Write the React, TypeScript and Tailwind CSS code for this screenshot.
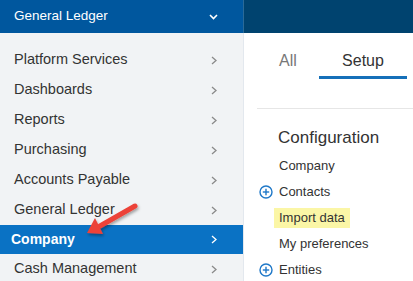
import React from "react";

const items = [
  "Platform Services",
  "Dashboards",
  "Reports",
  "Purchasing",
  "Accounts Payable",
  "General Ledger",
  "Company",
  "Cash Management",
];

function Chevron({ color }: { color: string }) {
  return (
    <svg width="6" height="9" viewBox="0 0 6 9" className="block">
      <polyline points="1,1 5,4.5 1,8" fill="none" stroke={color} strokeWidth="1.3" />
    </svg>
  );
}

function Plus() {
  return (
    <svg width="14" height="14" viewBox="0 0 14 14" className="block">
      <circle cx="7" cy="7" r="6" fill="none" stroke="#1f78c8" strokeWidth="1.4" />
      <line x1="7" y1="3.8" x2="7" y2="10.2" stroke="#1f78c8" strokeWidth="1.4" />
      <line x1="3.8" y1="7" x2="10.2" y2="7" stroke="#1f78c8" strokeWidth="1.4" />
    </svg>
  );
}

export default function App() {
  const font = { fontFamily: '"Liberation Sans", Arial, sans-serif' };
  return (
    <div className="relative w-[413px] h-[281px] overflow-hidden flex items-start bg-white" style={font}>
      <div className="w-[243px] h-[281px] shrink-0 bg-[#f1f3f5]">
        <div className="h-[33px] bg-[#00579e] flex items-center justify-between pl-[14px] pr-[25px] text-white text-[13.5px]">
          <span>General Ledger</span>
          <svg width="9" height="6" viewBox="0 0 9 6" className="block">
            <polyline points="1,1 4.5,4.5 8,1" fill="none" stroke="#ffffff" strokeWidth="1.6" />
          </svg>
        </div>
        <div className="pt-[12px]">
          {items.map((it) =>
            it === "Company" ? (
              <div key={it} className="h-[29px] flex items-center justify-between bg-[#0a72c4] pl-[11px] pr-[26px] text-white font-bold text-[14px]">
                <span>{it}</span>
                <Chevron color="#ffffff" />
              </div>
            ) : (
              <div key={it} className="h-[30px] flex items-center justify-between pl-[14px] pr-[26px] text-[#333333] text-[14.5px]">
                <span>{it}</span>
                <Chevron color="#8a8a8a" />
              </div>
            )
          )}
        </div>
      </div>
      <div className="flex-1 h-[281px] border-l border-[#e3e8ee]">
        <div className="h-[33px] bg-[#00436f] border-l border-[#2a6a98] -ml-px" />
        <div className="flex pl-[13px]">
          <div className="w-[62px] pt-[18px] pb-[8px] text-center text-[16px] leading-[20px] text-[#777777]">All</div>
          <div className="w-[88px] pt-[18px] pb-[5px] text-center text-[16px] leading-[20px] text-[#333333] border-b-[3px] border-[#1570b9]">Setup</div>
        </div>
        <div className="ml-[13px] mt-[29px] border-t border-[#e6e6e6]" />
        <div className="pl-[15px] pt-[19px]">
          <div className="text-[17px] leading-[20px] text-[#333333] ml-[19px]">Configuration</div>
          <div className="mt-[5px] text-[13px] text-[#333333]">
            <div className="h-[26px] flex items-center pl-[20px]">Company</div>
            <div className="h-[26px] flex items-center">
              <div className="w-[20px] flex items-center"><Plus /></div>
              <span>Contacts</span>
            </div>
            <div className="h-[26px] flex items-center pl-[15px]">
              <span className="bg-[#fbf6a6] px-[5px] leading-[20px]">Import data</span>
            </div>
            <div className="h-[26px] flex items-center pl-[20px]">My preferences</div>
            <div className="h-[26px] flex items-center">
              <div className="w-[20px] flex items-center"><Plus /></div>
              <span>Entities</span>
            </div>
          </div>
        </div>
      </div>
      <svg className="absolute left-0 top-0 pointer-events-none" width="413" height="281" viewBox="0 0 413 281">
        <defs>
          <filter id="sh" x="-20%" y="-20%" width="140%" height="140%">
            <feDropShadow dx="1" dy="2" stdDeviation="1.5" floodColor="#000" floodOpacity="0.35" />
          </filter>
        </defs>
        <g filter="url(#sh)">
          <line x1="135" y1="206" x2="100" y2="226" stroke="#ec4238" strokeWidth="5" strokeLinecap="round" />
          <polygon points="87,233 103,234 95,218" fill="#ec4238" />
        </g>
      </svg>
    </div>
  );
}
